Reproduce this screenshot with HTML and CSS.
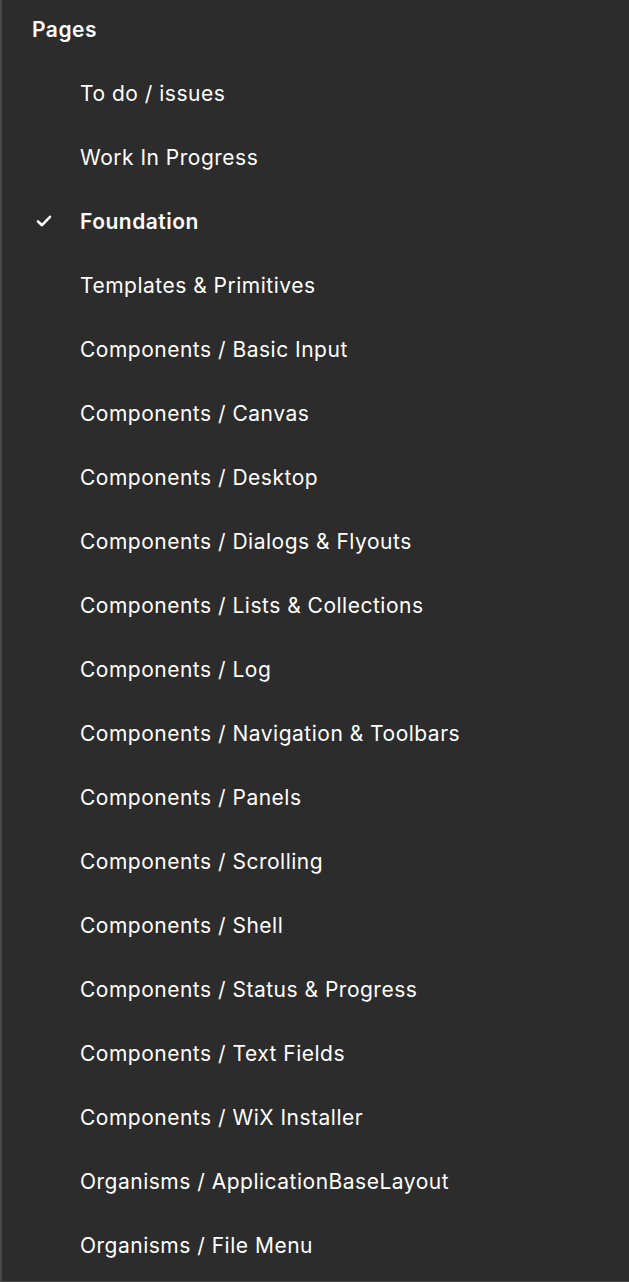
FILE: index.html
```html
<!DOCTYPE html>
<html lang="en">
<head>
<meta charset="utf-8">
<title>Pages</title>
<link rel="stylesheet" href="styles.css">
</head>
<body>
<div class="panel">
  <div class="header">Pages</div>
  <ul class="list">
    <li class="item"><span class="check"></span><span class="label">To do / issues</span></li>
    <li class="item"><span class="check"></span><span class="label">Work In Progress</span></li>
    <li class="item active"><span class="check"><svg width="16" height="14" viewBox="0 0 16 14"><path d="M2 7.5 L6 11.2 L14 2.8" fill="none" stroke="#fff" stroke-width="2.6" stroke-linecap="round" stroke-linejoin="round"/></svg></span><span class="label">Foundation</span></li>
    <li class="item"><span class="check"></span><span class="label">Templates &amp; Primitives</span></li>
    <li class="item"><span class="check"></span><span class="label">Components / Basic Input</span></li>
    <li class="item"><span class="check"></span><span class="label">Components / Canvas</span></li>
    <li class="item"><span class="check"></span><span class="label">Components / Desktop</span></li>
    <li class="item"><span class="check"></span><span class="label">Components / Dialogs &amp; Flyouts</span></li>
    <li class="item"><span class="check"></span><span class="label">Components / Lists &amp; Collections</span></li>
    <li class="item"><span class="check"></span><span class="label">Components / Log</span></li>
    <li class="item"><span class="check"></span><span class="label">Components / Navigation &amp; Toolbars</span></li>
    <li class="item"><span class="check"></span><span class="label">Components / Panels</span></li>
    <li class="item"><span class="check"></span><span class="label">Components / Scrolling</span></li>
    <li class="item"><span class="check"></span><span class="label">Components / Shell</span></li>
    <li class="item"><span class="check"></span><span class="label">Components / Status &amp; Progress</span></li>
    <li class="item"><span class="check"></span><span class="label">Components / Text Fields</span></li>
    <li class="item"><span class="check"></span><span class="label">Components / WiX Installer</span></li>
    <li class="item"><span class="check"></span><span class="label">Organisms / ApplicationBaseLayout</span></li>
    <li class="item"><span class="check"></span><span class="label">Organisms / File Menu</span></li>
  </ul>
</div>
</body>
</html>
```
FILE: styles.css
```css
html, body {
  margin: 0;
  padding: 0;
  background: #2c2c2c;
}
body {
  font-family: Inter, "Noto Sans", sans-serif;
  color: #ffffff;
  -webkit-font-smoothing: antialiased;
}
.panel {
  box-sizing: border-box;
  width: 629px;
  height: 1282px;
  background: #2c2c2c;
  border-left: 2px solid #474747;
  border-bottom: 1px solid #474747;
  overflow: hidden;
}
.header {
  padding: 18px 0 19px 30px;
  height: 24px;
  line-height: 24px;
  font-size: 21px;
  letter-spacing: 0.5px;
  font-weight: 600;
}
.list {
  list-style: none;
  margin: 0;
  padding: 0;
}
.item {
  display: flex;
  align-items: center;
  height: 64px;
  padding-left: 30px;
  font-size: 21px;
  letter-spacing: 0.5px;
  font-weight: 400;
}
.check {
  width: 48px;
  display: flex;
  align-items: center;
  flex: none;
}
.check svg {
  margin-left: 4px;
  margin-top: -1px;
  display: block;
}
.item.active .label {
  font-weight: 600;
}
```
